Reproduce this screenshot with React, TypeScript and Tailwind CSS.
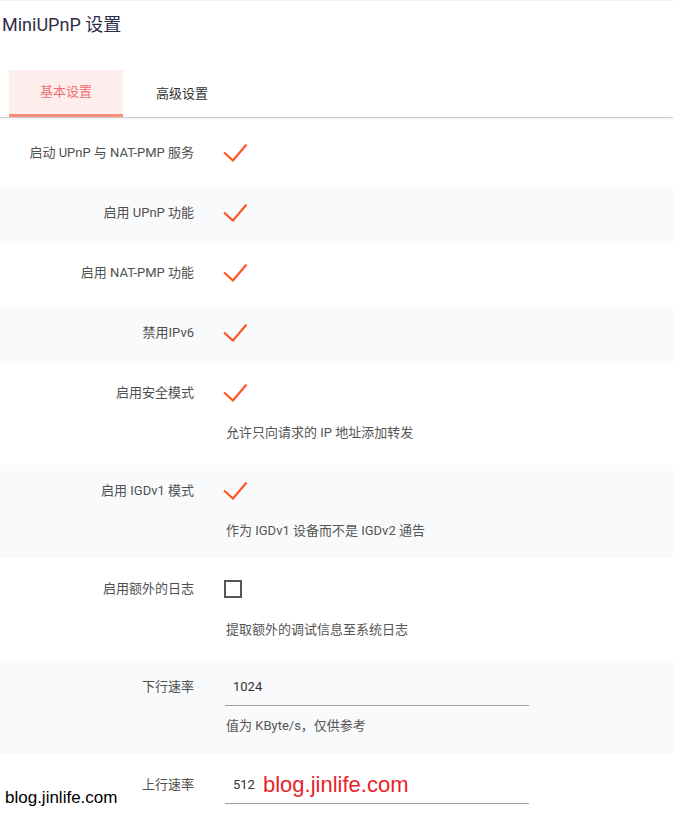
import React from "react";

const font = { fontFamily: 'Roboto, "Noto Sans CJK SC", sans-serif' };

function Check() {
  return (
    <div className="h-[20px]">
      <svg width="25" height="19" viewBox="0 0 25 19" className="block">
        <polyline
          points="1,9.5 10,17.5 23.5,1.5"
          fill="none"
          stroke="#ff5722"
          strokeWidth="2.2"
        />
      </svg>
    </div>
  );
}

function Box() {
  return (
    <div className="h-[20px]">
      <div className="w-[18px] h-[18px] border-2 border-[#555] mt-[1px] ml-[1px]" />
    </div>
  );
}

function Row({
  label,
  gray,
  pad,
  children,
}: {
  label: string;
  gray?: boolean;
  pad: string;
  children: React.ReactNode;
}) {
  return (
    <div className={`flex ${gray ? "bg-[#f9fafc]" : "bg-white"} ${pad}`}>
      <div className="w-[194px] shrink-0 text-right text-[13px] leading-[20px] text-[#505050]">
        {label}
      </div>
      <div className="pl-[29px] flex-1">{children}</div>
    </div>
  );
}

function Desc({ text, mt }: { text: string; mt: string }) {
  return <div className={`${mt} text-[13px] leading-[17px] text-[#555] pl-[3px]`}>{text}</div>;
}

function Field({ value }: { value: string }) {
  return (
    <div className="w-[304px] ml-[2px] border-b border-[#9e9e9e] pb-[8px] pl-[8px] text-[13px] leading-[20px] text-[#333]">
      {value}
    </div>
  );
}

export default function App() {
  return (
    <div className="relative w-[673px] h-[814px] overflow-hidden bg-white border-t border-[#f6f0f0]" style={font}>
      <div className="h-[69px] pt-[11px] pl-[2px] text-[18px] leading-[26px] text-[#2d2d48]">
        MiniUPnP 设置
      </div>
      <div className="flex pl-[9px] border-b border-[#cfcfcf] shadow-[0_1px_2px_rgba(0,0,0,0.08)]">
        <div className="w-[114px] h-[47px] bg-[#fdeded] border-b-[3px] border-[#ff8c78] flex items-center justify-center text-[13px] text-[#f07070]">
          基本设置
        </div>
        <div className="w-[118px] h-[47px] flex items-center justify-center text-[13px] text-[#333]">
          高级设置
        </div>
      </div>
      <div className="pt-[4px]">
        <Row label="启动 UPnP 与 NAT-PMP 服务" pad="pt-[21px] pb-[24px]">
          <Check />
        </Row>
        <Row label="启用 UPnP 功能" gray pad="pt-[16px] pb-[20px]">
          <Check />
        </Row>
        <Row label="启用 NAT-PMP 功能" pad="pt-[20px] pb-[24px]">
          <Check />
        </Row>
        <Row label="禁用IPv6" gray pad="pt-[16px] pb-[20px]">
          <Check />
        </Row>
        <Row label="启用安全模式" pad="pt-[20px] pb-[24px]">
          <Check />
          <Desc text="允许只向请求的 IP 地址添加转发" mt="mt-[21px]" />
        </Row>
        <Row label="启用 IGDv1 模式" gray pad="pt-[16px] pb-[19px]">
          <Check />
          <Desc text="作为 IGDv1 设备而不是 IGDv2 通告" mt="mt-[21px]" />
        </Row>
        <Row label="启用额外的日志" pad="pt-[21px] pb-[23px]">
          <Box />
          <Desc text="提取额外的调试信息至系统日志" mt="mt-[21px]" />
        </Row>
        <Row label="下行速率" gray pad="pt-[16px] pb-[20px]">
          <Field value="1024" />
          <Desc text="值为 KByte/s，仅供参考" mt="mt-[11px]" />
        </Row>
        <Row label="上行速率" pad="pt-[21px] pb-[20px]">
          <Field value="512" />
        </Row>
      </div>
      <div
        className="absolute left-[263px] top-[770px] text-[22px] leading-[28px] text-[#e8232b]"
        style={{ fontFamily: '"Liberation Sans", Arial, sans-serif' }}
      >
        blog.jinlife.com
      </div>
      <div
        className="absolute left-[5px] top-[787px] text-[17px] leading-[20px] text-black"
        style={{ fontFamily: '"Liberation Sans", Arial, sans-serif' }}
      >
        blog.jinlife.com
      </div>
    </div>
  );
}
